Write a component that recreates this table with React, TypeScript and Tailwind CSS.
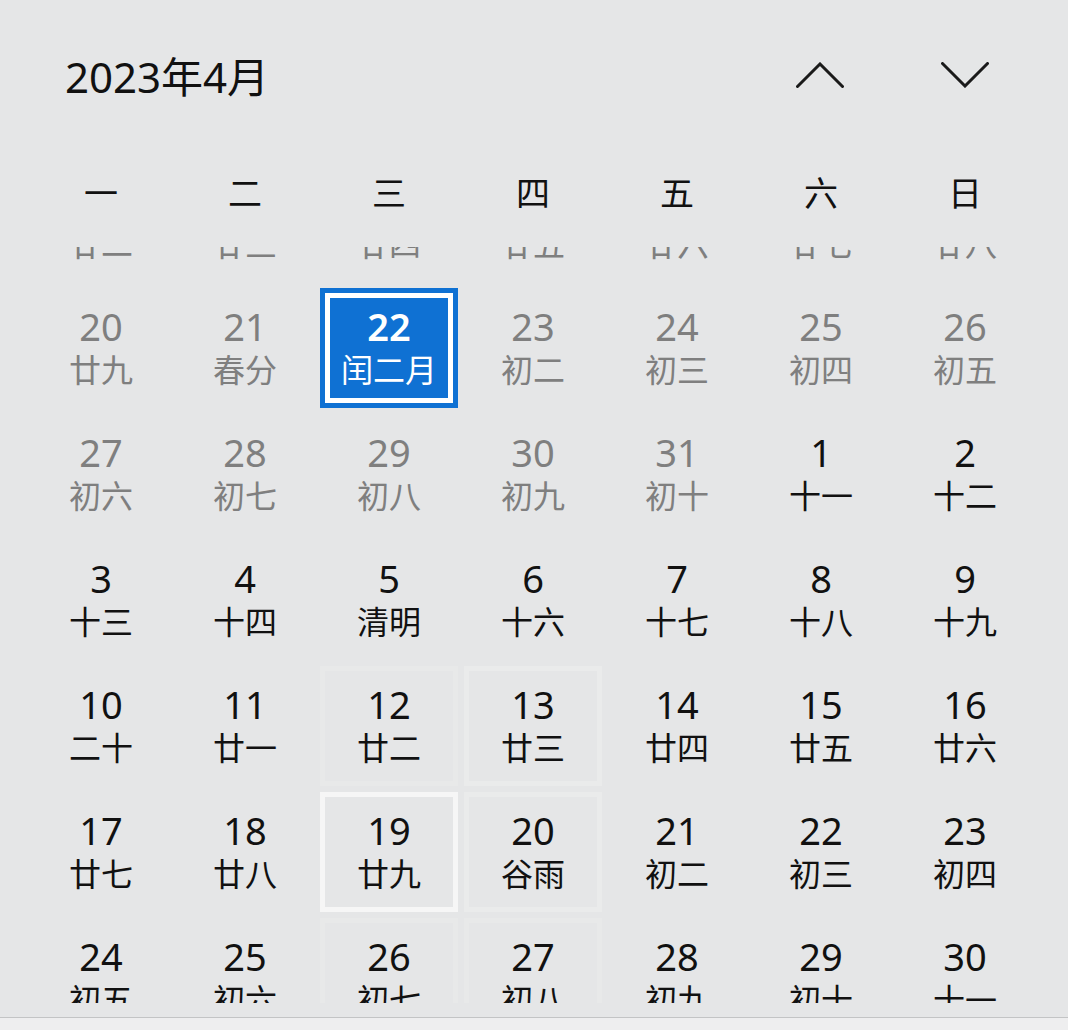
import React from "react";

type Cell = { d: number; l: string; cur: boolean; kind?: "sel" | "hover" | "reveal" | "faint" };

const rows: Cell[][] = [
  [13, 14, 15, 16, 17, 18, 19].map((d, i) => ({ d, l: ["廿二", "廿三", "廿四", "廿五", "廿六", "廿七", "廿八"][i], cur: false })),
  [
    { d: 20, l: "廿九", cur: false },
    { d: 21, l: "春分", cur: false },
    { d: 22, l: "闰二月", cur: false, kind: "sel" },
    { d: 23, l: "初二", cur: false },
    { d: 24, l: "初三", cur: false },
    { d: 25, l: "初四", cur: false },
    { d: 26, l: "初五", cur: false },
  ],
  [
    { d: 27, l: "初六", cur: false },
    { d: 28, l: "初七", cur: false },
    { d: 29, l: "初八", cur: false },
    { d: 30, l: "初九", cur: false },
    { d: 31, l: "初十", cur: false },
    { d: 1, l: "十一", cur: true },
    { d: 2, l: "十二", cur: true },
  ],
  [3, 4, 5, 6, 7, 8, 9].map((d, i) => ({ d, l: ["十三", "十四", "清明", "十六", "十七", "十八", "十九"][i], cur: true })),
  [10, 11, 12, 13, 14, 15, 16].map((d, i) => ({
    d,
    l: ["二十", "廿一", "廿二", "廿三", "廿四", "廿五", "廿六"][i],
    cur: true,
    kind: i === 2 ? ("faint" as const) : i === 3 ? ("reveal" as const) : undefined,
  })),
  [17, 18, 19, 20, 21, 22, 23].map((d, i) => ({
    d,
    l: ["廿七", "廿八", "廿九", "谷雨", "初二", "初三", "初四"][i],
    cur: true,
    kind: i === 2 ? ("hover" as const) : i === 3 ? ("reveal" as const) : undefined,
  })),
  [24, 25, 26, 27, 28, 29, 30].map((d, i) => ({
    d,
    l: ["初五", "初六", "初七", "初八", "初九", "初十", "十一"][i],
    cur: true,
    kind: i === 2 || i === 3 ? ("faint" as const) : undefined,
  })),
];

const weekdays = ["一", "二", "三", "四", "五", "六", "日"];

function Content({ c, white }: { c: Cell; white?: boolean }) {
  const color = white ? "text-white" : c.cur ? "text-[#111111]" : "text-[#7f7f7f]";
  return (
    <div className={`flex flex-col items-center ${color}`}>
      <div className={`text-[38px] leading-[44px] ${white ? "font-semibold" : ""}`}>{c.d}</div>
      <div className="text-[32px] leading-[44px] whitespace-nowrap">{c.l}</div>
    </div>
  );
}

function DayCell({ c }: { c: Cell }) {
  if (c.kind === "sel") {
    return (
      <div className="m-[3px] h-[120px] border-[5px] border-[#0f71d3]">
        <div className="h-full border-[5px] border-white bg-[#0f71d3] pt-[6px]">
          <Content c={c} white />
        </div>
      </div>
    );
  }
  const border =
    c.kind === "hover"
      ? "border-[#f6f6f6]"
      : c.kind === "reveal"
      ? "border-white/20"
      : c.kind === "faint"
      ? "border-white/10"
      : "border-transparent";
  return (
    <div className={`m-[3px] h-[120px] border-[5px] ${border} pt-[11px]`}>
      <Content c={c} />
    </div>
  );
}

function Chevron({ up }: { up?: boolean }) {
  return (
    <svg width="48" height="26" viewBox="0 0 48 26" fill="none">
      <polyline
        points={up ? "1.5,24.5 24,2 46.5,24.5" : "1.5,1.5 24,24 46.5,1.5"}
        stroke="#1a1a1a"
        strokeWidth="3"
        strokeLinecap="round"
        strokeLinejoin="miter"
      />
    </svg>
  );
}

export default function App() {
  return (
    <div
      className="w-[1068px] h-[1030px] bg-[#e5e6e7] flex flex-col overflow-hidden"
      style={{ fontFamily: '"Noto Sans", "Noto Sans CJK SC", sans-serif' }}
    >
      <div className="h-[154px] flex items-center shrink-0">
        <div className="ml-[65px] text-[42px] leading-none text-[#111111] whitespace-nowrap">2023年4月</div>
        <div className="flex-1" />
        <div className="flex items-center gap-[97px] pr-[79px] -mt-[4px]">
          <Chevron up />
          <Chevron />
        </div>
      </div>
      <div className="grid grid-cols-[repeat(7,144px)] pl-[29px] h-[78px] items-center shrink-0">
        {weekdays.map((w) => (
          <div key={w} className="text-center text-[34px] leading-none text-[#111111]">
            {w}
          </div>
        ))}
      </div>
      <div className="mt-[15px] h-[756px] overflow-hidden shrink-0">
        <div className="-mt-[88px] pl-[29px] grid grid-cols-[repeat(7,144px)]">
          {rows.flat().map((c, i) => (
            <DayCell key={i} c={c} />
          ))}
        </div>
      </div>
      <div className="h-[14px] shrink-0" />
      <div className="flex-1 border-t border-[#c3c4c5] bg-[#eeeeef]" />
    </div>
  );
}
